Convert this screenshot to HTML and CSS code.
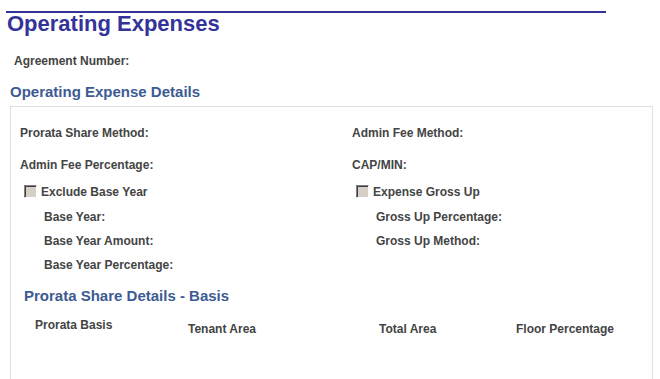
FILE: index.html
```html
<!DOCTYPE html>
<html>
<head>
<meta charset="utf-8">
<link rel="stylesheet" href="styles.css">
</head>
<body>
<div class="page">
  <div class="rule"></div>
  <h1 class="title">Operating Expenses</h1>
  <div class="agreement label">Agreement Number:</div>
  <h2 class="section">Operating Expense Details</h2>
  <div class="box">
    <div class="grid">
      <div class="label row1">Prorata Share Method:</div>
      <div class="label row1">Admin Fee Method:</div>
      <div class="label row2">Admin Fee Percentage:</div>
      <div class="label row2">CAP/MIN:</div>
      <div class="check-row">
        <span class="checkbox"></span><span class="label">Exclude Base Year</span>
      </div>
      <div class="check-row">
        <span class="checkbox"></span><span class="label">Expense Gross Up</span>
      </div>
      <div class="sub">
        <div class="label subrow">Base Year:</div>
        <div class="label subrow">Base Year Amount:</div>
        <div class="label subrow">Base Year Percentage:</div>
      </div>
      <div class="sub">
        <div class="label subrow">Gross Up Percentage:</div>
        <div class="label subrow">Gross Up Method:</div>
      </div>
    </div>
    <h2 class="section basis-title">Prorata Share Details - Basis</h2>
    <div class="basis">
      <div class="label col-head first">Prorata Basis</div>
      <div class="label col-head">Tenant Area</div>
      <div class="label col-head">Total Area</div>
      <div class="label col-head">Floor Percentage</div>
    </div>
  </div>
</div>
</body>
</html>
```

FILE: styles.css
```css
html, body {
  margin: 0;
  padding: 0;
  background: #ffffff;
}

body {
  font-family: "Liberation Sans", Arial, sans-serif;
  overflow: hidden;
}

.page {
  padding-top: 11px;
  padding-left: 6px;
}

.rule {
  width: 600px;
  height: 2px;
  background: #333399;
}

.title {
  margin: 0 0 0 1px;
  font-size: 22px;
  line-height: 22px;
  font-weight: bold;
  color: #333399;
}

.label {
  font-size: 12px;
  line-height: 16px;
  font-weight: bold;
  color: #444444;
  white-space: nowrap;
}

.agreement {
  margin-top: 18px;
  margin-left: 8px;
}

.section {
  margin: 14px 0 0 4px;
  font-size: 15px;
  line-height: 18px;
  font-weight: bold;
  color: #3d5b92;
}

.box {
  margin-top: 5px;
  margin-left: 4px;
  width: 643px;
  height: 274px;
  border: 1px solid #e0e0e0;
  padding-left: 9px;
  box-sizing: border-box;
}

.grid {
  display: grid;
  grid-template-columns: 332px 1fr;
  padding-top: 18px;
}

.row2 {
  margin-top: 16px;
}

.check-row {
  display: flex;
  align-items: center;
  margin-top: 11px;
  padding-left: 4px;
}

.checkbox {
  width: 11px;
  height: 11px;
  background: #d4d0c8;
  border-top: 1px solid #808080;
  border-left: 1px solid #808080;
  border-right: 1px solid #ffffff;
  border-bottom: 1px solid #ffffff;
  box-shadow: inset 1px 1px 0 #404040;
  margin-right: 4px;
  margin-top: -1px;
}

.sub {
  display: flex;
  flex-direction: column;
  gap: 8px;
  padding-left: 24px;
  margin-top: 9px;
}

.basis-title {
  margin: 14px 0 0 4px;
}

.basis {
  display: grid;
  grid-template-columns: 153px 191px 137px 1fr;
  padding-left: 15px;
  margin-top: 12px;
  align-items: start;
}

.col-head {
  padding-top: 4px;
}

.col-head.first {
  padding-top: 0;
}
```
